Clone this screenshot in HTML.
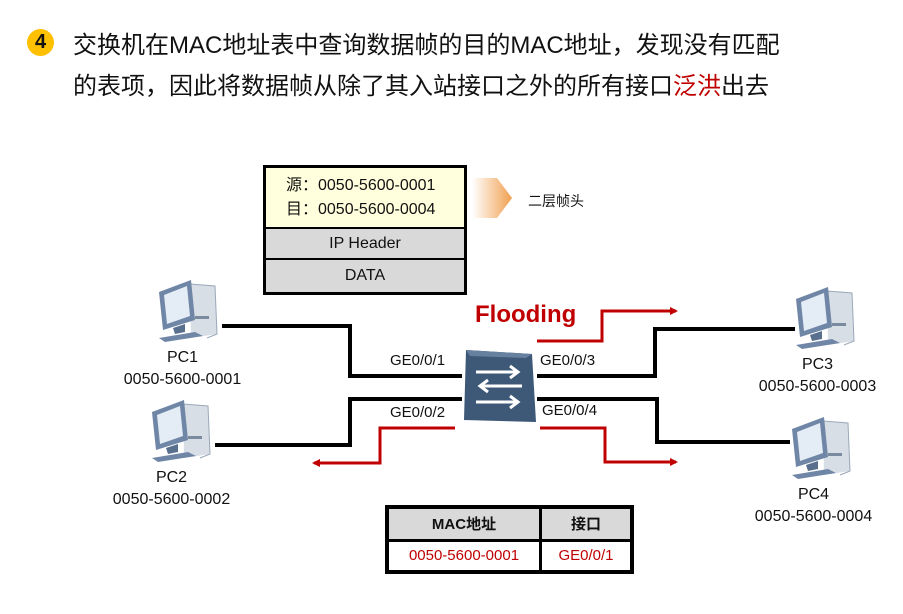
<!DOCTYPE html>
<html><head><meta charset="utf-8"><style>
body{margin:0;width:903px;height:614px;background:#fff;position:relative;overflow:hidden;font-family:"Liberation Sans","Noto Sans CJK SC",sans-serif;color:#111}
.a{position:absolute;white-space:nowrap}
.t{font-size:24px;left:73px}
.s{font-size:15px}
</style></head><body>
<div class="a" style="left:27px;top:29px;width:27px;height:27px;border-radius:50%;background:#FFC000;font-weight:bold;font-size:20px;text-align:center;line-height:27px">4</div>
<div class="a t" style="top:25px">交换机在MAC地址表中查询数据帧的目的MAC地址，发现没有匹配</div>
<div class="a t" style="top:66px">的表项，因此将数据帧从除了其入站接口之外的所有接口<span style="color:#C00000">泛洪</span>出去</div>

<div class="a" style="left:263px;top:165px;width:198px;height:124px;border:3px solid #000;background:#000">
 <div style="height:59px;background:#FFFFDD;font-size:16px;padding-left:20px;line-height:24px;padding-top:6px;box-sizing:border-box">源：0050-5600-0001<br>目：0050-5600-0004</div>
 <div style="margin-top:2px;height:29px;background:#D9D9D9;text-align:center;line-height:29px;font-size:16px">IP Header</div>
 <div style="margin-top:2px;height:32px;background:#D9D9D9;text-align:center;line-height:32px;font-size:16px">DATA</div>
</div>
<svg class="a" style="left:0;top:0" width="903" height="614">
<defs>
<linearGradient id="g" x1="0" x2="1"><stop offset="0" stop-color="#fff"/><stop offset="1" stop-color="#F0A050"/></linearGradient>
<marker id="m" markerWidth="8" markerHeight="8" refX="6" refY="4" orient="auto" markerUnits="userSpaceOnUse"><path d="M0,0 L8,4 L0,8 Z" fill="#C00000"/></marker>
<g id="pc">
<path d="M35,8 L60,10 L62,58 L36,62 Z" fill="#D8DEE6"/>
<path d="M35,8 L60,10 L62,58 L52,62" fill="none" stroke="#9AA8B8"/>
<rect x="40" y="40" width="14" height="3" fill="#7A8BA0"/>
<path d="M4,16 L36,4 L40,44 L8,54 Z" fill="#6F86A6"/>
<path d="M9,19 L32,10 L35,40 L12,48 Z" fill="#E4ECF6"/>
<path d="M18,52 L30,48 L30,56 L20,58 Z" fill="#58708E"/>
<path d="M4,62 L40,56 L48,60 L10,66 Z" fill="#6F86A6"/>
</g>
</defs>
<path d="M472,178 L497,178 L512,198 L497,218 L472,218 L472,178" fill="url(#g)"/>
<g stroke="#000" stroke-width="4" fill="none">
<path d="M222,326 H350 V376 H462"/>
<path d="M215,445 H350 V399 H462"/>
<path d="M537,376 H655 V329 H795"/>
<path d="M537,399 H657 V442 H790"/>
</g>
<g stroke="#C00000" stroke-width="3" fill="none">
<path d="M537,341 H602 V311 H676" marker-end="url(#m)"/>
<path d="M455,428 H380 V463 H314" marker-end="url(#m)"/>
<path d="M540,428 H605 V462 H676" marker-end="url(#m)"/>
</g>
<g transform="translate(462,350)">
<path d="M4,0 L70,4 L74,72 L2,70 Z" fill="#3E5878"/>
<path d="M4,0 L70,4 L64,8 L8,6 Z" fill="#6680A0"/>
<g stroke="#fff" stroke-width="3" fill="none">
<path d="M14,22 H56 M48,16 L56,22 L48,28"/>
<path d="M60,36 H18 M26,30 L18,36 L26,42"/>
<path d="M14,52 H56 M48,46 L56,52 L48,58"/>
</g>
</g>
<use href="#pc" x="155" y="276"/>
<use href="#pc" x="148" y="396"/>
<use href="#pc" x="792" y="283"/>
<use href="#pc" x="788" y="413"/>
</svg>
<div class="a s" style="left:528px;top:191px;font-size:14px">二层帧头</div>
<div class="a" style="left:475px;top:301px;font-size:24px;font-weight:bold;color:#C00000">Flooding</div>
<div class="a s" style="left:390px;top:352px">GE0/0/1</div>
<div class="a s" style="left:540px;top:352px">GE0/0/3</div>
<div class="a s" style="left:390px;top:404px">GE0/0/2</div>
<div class="a s" style="left:542px;top:402px">GE0/0/4</div>
<div class="a s" style="left:115px;top:347px;width:135px;text-align:center;font-size:16px;line-height:22px">PC1<br>0050-5600-0001</div>
<div class="a s" style="left:104px;top:467px;width:135px;text-align:center;font-size:16px;line-height:22px">PC2<br>0050-5600-0002</div>
<div class="a s" style="left:750px;top:354px;width:135px;text-align:center;font-size:16px;line-height:22px">PC3<br>0050-5600-0003</div>
<div class="a s" style="left:746px;top:484px;width:135px;text-align:center;font-size:16px;line-height:22px">PC4<br>0050-5600-0004</div>
<table class="a" style="left:385px;top:505px;border-collapse:collapse;border:4px solid #000;font-size:15px">
<tr style="background:#D9D9D9;height:33px"><td style="width:148px;text-align:center;font-weight:bold;border-right:3px solid #000;border-bottom:3px solid #000">MAC地址</td><td style="width:86px;text-align:center;font-weight:bold;border-bottom:3px solid #000">接口</td></tr>
<tr style="height:32px;color:#C00000"><td style="text-align:center;border-right:3px solid #000">0050-5600-0001</td><td style="text-align:center">GE0/0/1</td></tr>
</table>
</body></html>
